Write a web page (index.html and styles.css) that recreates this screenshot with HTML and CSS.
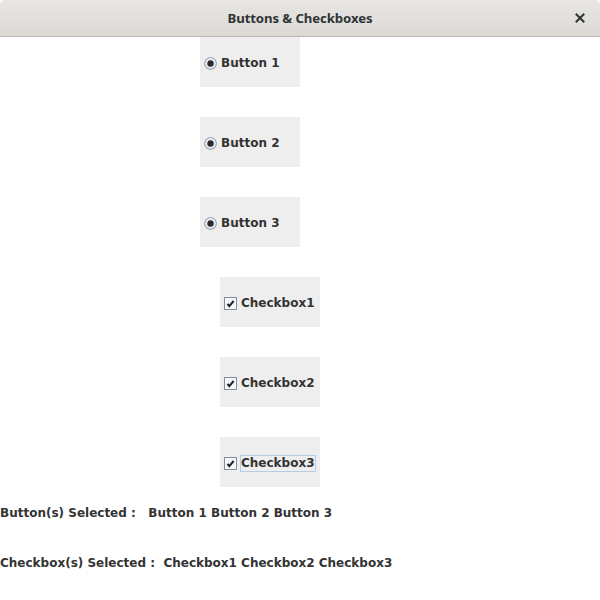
FILE: index.html
```html
<!DOCTYPE html>
<html>
<head>
<meta charset="utf-8">
<link rel="stylesheet" href="styles.css">
</head>
<body>
<div class="window">
  <header class="titlebar">
    <span class="title">Buttons &amp; Checkboxes</span>
    <span class="close">
      <svg width="10" height="10" viewBox="0 0 10 10"><path d="M1.5 1.5 L8.5 8.5 M8.5 1.5 L1.5 8.5" stroke="#2e3436" stroke-width="2" stroke-linecap="square"/></svg>
    </span>
  </header>
  <main class="content">
    <div class="options">
      <div class="opt radio">
        <svg class="ico" width="13" height="13" viewBox="0 0 13 13"><defs><radialGradient id="rg" cx="0.5" cy="0.4" r="0.6"><stop offset="0" stop-color="#ffffff"/><stop offset="1" stop-color="#d6dde6"/></radialGradient></defs><circle cx="6.5" cy="6.5" r="5.9" fill="url(#rg)" stroke="#8a9bb0" stroke-width="1"/><circle cx="6.5" cy="6.5" r="3.2" fill="#2b2b2b"/></svg>
        <span class="lbl">Button 1</span>
      </div>
      <div class="opt radio">
        <svg class="ico" width="13" height="13" viewBox="0 0 13 13"><circle cx="6.5" cy="6.5" r="5.9" fill="url(#rg)" stroke="#8a9bb0" stroke-width="1"/><circle cx="6.5" cy="6.5" r="3.2" fill="#2b2b2b"/></svg>
        <span class="lbl">Button 2</span>
      </div>
      <div class="opt radio">
        <svg class="ico" width="13" height="13" viewBox="0 0 13 13"><circle cx="6.5" cy="6.5" r="5.9" fill="url(#rg)" stroke="#8a9bb0" stroke-width="1"/><circle cx="6.5" cy="6.5" r="3.2" fill="#2b2b2b"/></svg>
        <span class="lbl">Button 3</span>
      </div>
      <div class="opt check">
        <svg class="ico" width="13" height="13" viewBox="0 0 13 13"><rect x="0.5" y="0.5" width="12" height="12" fill="#f4f6f9" stroke="#7d8fa3"/><path d="M3.5 6.8 L5.3 9.2 L9.6 4" fill="none" stroke="#222" stroke-width="2"/></svg>
        <span class="lbl">Checkbox1</span>
      </div>
      <div class="opt check">
        <svg class="ico" width="13" height="13" viewBox="0 0 13 13"><rect x="0.5" y="0.5" width="12" height="12" fill="#f4f6f9" stroke="#7d8fa3"/><path d="M3.5 6.8 L5.3 9.2 L9.6 4" fill="none" stroke="#222" stroke-width="2"/></svg>
        <span class="lbl">Checkbox2</span>
      </div>
      <div class="opt check">
        <svg class="ico" width="13" height="13" viewBox="0 0 13 13"><rect x="0.5" y="0.5" width="12" height="12" fill="#f4f6f9" stroke="#7d8fa3"/><path d="M3.5 6.8 L5.3 9.2 L9.6 4" fill="none" stroke="#222" stroke-width="2"/></svg>
        <span class="lbl focused">Checkbox3</span>
      </div>
    </div>
    <div class="status">Button(s) Selected :   Button 1 Button 2 Button 3</div>
    <div class="status">Checkbox(s) Selected :  Checkbox1 Checkbox2 Checkbox3</div>
  </main>
</div>
</body>
</html>
```
FILE: styles.css
```css
html, body {
  margin: 0;
  padding: 0;
  background: #ffffff;
}
.window {
  width: 600px;
  height: 600px;
  background: #ffffff;
}
.titlebar {
  height: 36px;
  border-bottom: 1px solid #bdb6ae;
  border-radius: 5px 5px 0 0;
  background: linear-gradient(#e8e6e3, #dcd9d5);
  display: flex;
  align-items: center;
  justify-content: center;
  position: relative;
  box-sizing: content-box;
}
.title {
  font-family: "Noto Sans", "DejaVu Sans", sans-serif;
  font-weight: bold;
  font-size: 13.2px;
  color: #2e3436;
  letter-spacing: -0.1px;
}
.close {
  position: absolute;
  right: 15px;
  top: 13px;
  width: 10px;
  height: 10px;
  display: flex;
}
.content {
  display: flex;
  flex-direction: column;
  font-family: "DejaVu Sans", sans-serif;
  font-weight: bold;
  font-size: 12px;
  color: #333333;
}
.options {
  display: flex;
  flex-direction: column;
  gap: 30px;
}
.opt {
  width: 100px;
  height: 50px;
  background: #eeeeee;
  display: flex;
  align-items: center;
  padding-left: 4px;
  padding-top: 2px;
  box-sizing: border-box;
}
.radio {
  margin-left: 200px;
}
.check {
  margin-left: 220px;
}
.ico {
  flex: none;
  margin-right: 3px;
}
.lbl {
  border: 1px solid transparent;
  line-height: 15px;
  white-space: pre;
}
.lbl.focused {
  border-color: #b7cde3;
}
.status {
  height: 50px;
  display: flex;
  align-items: center;
  padding-top: 2px;
  box-sizing: border-box;
  white-space: pre;
}
```
